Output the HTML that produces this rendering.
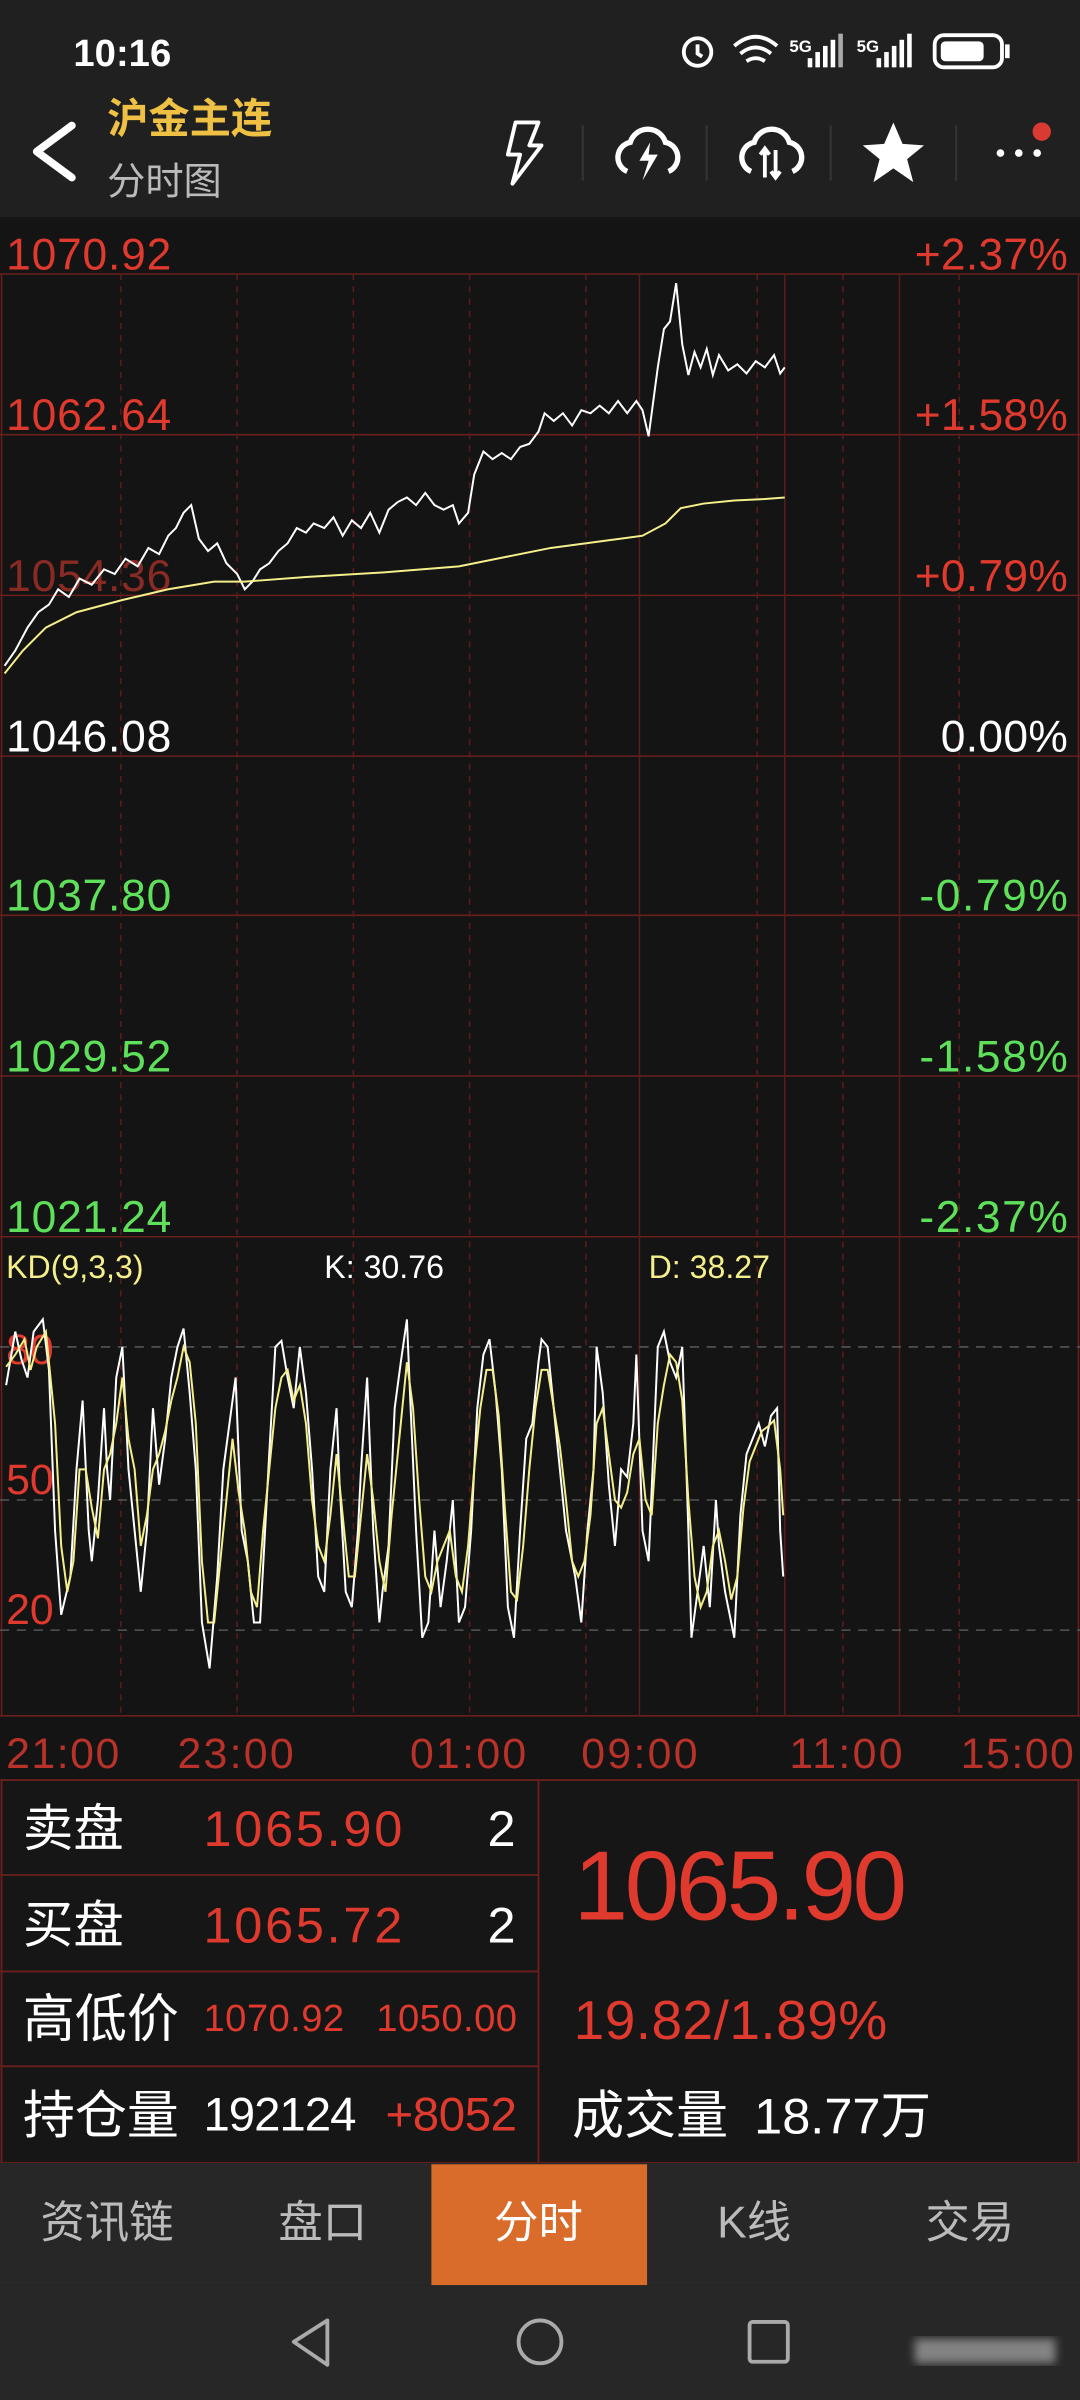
<!DOCTYPE html>
<html><head><meta charset="utf-8"><style>
html,body{margin:0;padding:0;background:#141414;}
svg{display:block;width:1080px;height:2400px;}
text{font-family:"Liberation Sans","Noto Sans CJK SC",sans-serif;}
</style></head><body>
<svg viewBox="0 0 706 1568" preserveAspectRatio="none" xmlns="http://www.w3.org/2000/svg">
<defs><filter id="bl"><feGaussianBlur stdDeviation="3"/></filter></defs>
<rect x="0" y="0" width="706" height="142" fill="#202020"/>
<rect x="0" y="142" width="706" height="1021" fill="#141414"/>
<text x="48" y="43" font-size="25" fill="#fff" font-weight="bold">10:16</text>
<g fill="none" stroke="#fff" stroke-width="2.5">
<circle cx="456" cy="34" r="9"/><path d="M456 29v6l3 2"/>
<path d="M480 30q14-12 28 0M484 35q10-8 20 0M488 40q6-4 12 0"/>
<rect x="611" y="23" width="44" height="21" rx="6"/>
</g>
<rect x="615" y="27" width="28" height="13" rx="3" fill="#fff"/>
<rect x="657" y="29" width="3" height="9" fill="#fff"/>
<text x="516" y="34" font-size="11" fill="#fff" font-weight="bold">5G</text>
<text x="560" y="34" font-size="11" fill="#fff" font-weight="bold">5G</text>
<g fill="#fff"><rect x="528" y="38" width="3" height="6"/><rect x="533" y="34" width="3" height="10"/><rect x="538" y="30" width="3" height="14"/><rect x="543" y="26" width="3" height="18"/><rect x="573" y="38" width="3" height="6"/><rect x="578" y="34" width="3" height="10"/><rect x="583" y="30" width="3" height="14"/><rect x="588" y="26" width="3" height="18"/><rect x="593" y="22" width="3" height="22"/><rect x="548" y="22" width="3" height="22" fill="#aaa"/></g>
<path d="M47 82 L24 99 L47 116" fill="none" stroke="#fff" stroke-width="5" stroke-linecap="round" stroke-linejoin="round"/>
<text x="70" y="87" font-size="27" fill="#eec043" font-weight="bold">沪金主连</text>
<text x="70" y="127" font-size="25" fill="#bbb">分时图</text>
<path d="M337 80 L352 80 L346 95 L354 95 L335 120 L340 101 L332 101 Z" fill="none" stroke="#fff" stroke-width="2.5" stroke-linejoin="round"/>
<g stroke="#333" stroke-width="1.5"><line x1="381" y1="82" x2="381" y2="118"/><line x1="462" y1="82" x2="462" y2="118"/><line x1="543" y1="82" x2="543" y2="118"/><line x1="625" y1="82" x2="625" y2="118"/></g>
<path d="M410 112 a10 10 0 0 1 2-19 a12 12 0 0 1 23 0 a10 10 0 0 1 2 19" fill="none" stroke="#fff" stroke-width="3.5"/>
<path d="M425 93 L418 105 L424 105 L420 118 L430 101 L424 101 Z" fill="#fff"/>
<path d="M491 112 a10 10 0 0 1 2-19 a12 12 0 0 1 23 0 a10 10 0 0 1 2 19" fill="none" stroke="#fff" stroke-width="3.5"/>
<path d="M500 98v18M507 98v18M497 101l3-4 3 4M504 112l3 4 3-4" fill="none" stroke="#fff" stroke-width="2.5"/>
<path d="M584 80 L590 94 L604 95 L593 104 L597 119 L584 110 L571 119 L575 104 L564 95 L578 94 Z" fill="#fff"/>
<g fill="#fff"><circle cx="654" cy="100" r="2.5"/><circle cx="666" cy="100" r="2.5"/><circle cx="678" cy="100" r="2.5"/></g>
<circle cx="681" cy="86" r="6" fill="#d93b32"/>
<g stroke="#6a1f1c" stroke-width="1">
<line x1="0" y1="179" x2="706" y2="179"/><line x1="0" y1="284" x2="706" y2="284"/><line x1="0" y1="389" x2="706" y2="389"/><line x1="0" y1="494" x2="706" y2="494"/><line x1="0" y1="598" x2="706" y2="598"/><line x1="0" y1="703" x2="706" y2="703"/><line x1="0" y1="808" x2="706" y2="808"/><line x1="0" y1="1121" x2="706" y2="1121"/>
<line x1="1" y1="179" x2="1" y2="1121"/><line x1="705" y1="179" x2="705" y2="1121"/>
</g>
<g stroke="#5a1c1a" stroke-width="1" stroke-dasharray="4,4">
<line x1="79" y1="179" x2="79" y2="1121"/><line x1="155" y1="179" x2="155" y2="1121"/><line x1="231" y1="179" x2="231" y2="1121"/><line x1="307" y1="179" x2="307" y2="1121"/><line x1="383" y1="179" x2="383" y2="1121"/><line x1="495" y1="179" x2="495" y2="1121"/><line x1="551" y1="179" x2="551" y2="1121"/><line x1="627" y1="179" x2="627" y2="1121"/>
</g>
<g stroke="#5a1c1a" stroke-width="1"><line x1="418" y1="179" x2="418" y2="1121"/><line x1="513" y1="179" x2="513" y2="1121"/><line x1="588" y1="179" x2="588" y2="1121"/></g>
<g font-size="29">
<text x="4" y="176" fill="#e0392e" textLength="108">1070.92</text><text x="598" y="176" fill="#e0392e" textLength="100">+2.37%</text>
<text x="4" y="281" fill="#e0392e" textLength="108">1062.64</text><text x="598" y="281" fill="#e0392e" textLength="100">+1.58%</text>
<text x="4" y="386" fill="#8a2a24" textLength="108">1054.36</text><text x="598" y="386" fill="#e0392e" textLength="100">+0.79%</text>
<text x="4" y="491" fill="#fff" textLength="108">1046.08</text><text x="615" y="491" fill="#fff" textLength="83">0.00%</text>
<text x="4" y="595" fill="#5ee05a" textLength="108">1037.80</text><text x="601" y="595" fill="#5ee05a" textLength="97">-0.79%</text>
<text x="4" y="700" fill="#5ee05a" textLength="108">1029.52</text><text x="601" y="700" fill="#5ee05a" textLength="97">-1.58%</text>
<text x="4" y="805" fill="#5ee05a" textLength="108">1021.24</text><text x="601" y="805" fill="#5ee05a" textLength="97">-2.37%</text>
</g>
<polyline fill="none" stroke="#fff" stroke-width="1.3" points="3,435 10,425 18,410 25,400 32,395 38,385 45,390 52,378 60,382 68,372 75,375 82,365 90,370 97,358 104,362 110,350 115,345 120,335 125,330 130,352 136,360 142,355 148,368 155,375 160,385 165,380 170,372 176,368 182,360 188,355 194,345 200,348 205,342 212,345 218,338 224,350 230,340 236,345 242,335 248,348 254,333 260,328 266,325 272,330 278,322 284,330 290,333 296,330 300,342 306,335 310,310 316,295 322,300 328,296 334,300 340,292 346,290 352,282 356,270 362,275 368,270 374,278 380,268 386,270 392,265 398,270 404,262 410,270 416,262 420,268 424,285 430,240 434,215 438,210 442,185 446,225 450,245 454,230 458,240 462,228 466,245 470,232 476,242 482,238 488,244 494,236 500,240 506,232 510,244 513,240"/>
<polyline fill="none" stroke="#f4ef8a" stroke-width="1.3" points="3,440 15,425 30,410 50,400 80,392 110,385 140,380 160,380 200,377 250,374 300,370 330,364 360,358 390,354 420,350 435,342 445,332 460,329 480,327 500,326 513,325"/>
<text x="4" y="835" font-size="21" fill="#f4ef8a">KD(9,3,3)</text>
<text x="212" y="835" font-size="21" fill="#fff">K: 30.76</text>
<text x="424" y="835" font-size="21" fill="#f4ef8a">D: 38.27</text>
<g stroke="#555" stroke-dasharray="6,5"><line x1="0" y1="880" x2="706" y2="880"/><line x1="0" y1="980" x2="706" y2="980"/><line x1="0" y1="1065" x2="706" y2="1065"/></g>
<g font-size="28" fill="#e0392e"><text x="4" y="891">80</text><text x="4" y="976">50</text><text x="4" y="1061">20</text></g>
<polyline fill="none" stroke="#fff" stroke-width="1.3" points="4,905 10,870 14,888 18,900 22,870 28,862 32,895 36,1000 40,1055 46,1030 50,960 54,915 58,1000 60,1020 64,980 68,920 70,960 72,980 76,900 80,880 84,960 88,1000 92,1040 96,1000 100,920 104,970 108,940 112,900 116,880 120,868 124,910 128,960 132,1060 137,1090 142,1030 146,960 150,930 154,900 156,950 158,1000 162,1020 166,1060 170,1060 176,950 180,880 184,876 188,900 192,920 196,880 200,910 204,960 208,1030 212,1040 216,960 220,920 222,970 226,1040 230,1050 234,1000 236,960 240,900 244,1000 248,1060 250,1040 254,1010 258,920 262,890 266,862 268,910 272,1000 276,1070 280,1060 284,1000 288,1050 292,1020 296,980 300,1060 304,1050 308,1000 312,920 316,885 320,875 324,910 328,960 332,1050 336,1070 340,1000 344,940 348,930 352,890 354,875 358,880 362,920 366,960 370,1000 376,1030 380,1060 384,1000 388,960 390,880 394,910 398,970 402,1010 406,960 410,965 414,930 416,885 420,1000 424,1020 430,880 434,870 438,890 442,900 446,880 450,1000 452,1070 456,1040 460,1010 464,1050 468,980 470,1010 474,1040 478,1060 480,1070 484,990 488,950 492,940 496,930 500,945 504,925 508,920 510,1000 512,1030"/>
<polyline fill="none" stroke="#f4ef8a" stroke-width="1.3" points="4,893 10,885 16,875 20,895 24,880 30,870 36,930 40,1010 44,1040 48,1020 52,960 56,960 60,985 64,1005 68,960 72,950 76,930 80,900 84,940 88,960 92,1010 96,990 100,960 104,950 108,935 112,915 116,900 120,880 124,890 128,930 132,1020 136,1060 140,1060 144,1020 148,980 152,940 156,975 160,1000 164,1040 168,1050 172,1000 176,960 180,920 184,900 188,895 192,915 196,905 200,930 204,980 208,1010 212,1020 216,990 220,950 224,990 228,1030 232,1030 236,990 240,950 244,980 248,1020 252,1040 256,990 262,930 266,890 270,920 274,980 278,1030 282,1040 286,1020 290,1010 294,1000 298,1030 302,1040 306,1010 310,960 314,920 318,895 322,895 326,925 330,985 334,1040 338,1045 342,1010 346,960 350,920 354,895 358,895 362,920 366,945 370,980 374,1020 378,1030 382,1020 386,990 390,930 394,920 398,950 402,980 406,985 410,975 414,950 418,940 422,980 426,990 430,930 434,905 438,885 442,890 446,915 450,980 454,1030 458,1050 462,1040 466,1010 470,1000 474,1020 478,1045 482,1030 486,985 490,955 494,945 498,935 502,932 506,928 510,960 512,990"/>
<g font-size="28" fill="#b8322a"><text x="4" y="1155" textLength="74">21:00</text><text x="116" y="1155" textLength="76">23:00</text><text x="268" y="1155" textLength="76">01:00</text><text x="380" y="1155" textLength="76">09:00</text><text x="516" y="1155" textLength="74">11:00</text><text x="628" y="1155" textLength="74">15:00</text></g>
<rect x="0" y="1163" width="706" height="250" fill="#161616"/>
<g stroke="#6a1f1c" stroke-width="1.2" fill="none">
<line x1="0" y1="1163" x2="706" y2="1163"/><line x1="0" y1="1225" x2="352" y2="1225"/><line x1="0" y1="1288" x2="352" y2="1288"/><line x1="0" y1="1350" x2="352" y2="1350"/><line x1="0" y1="1413" x2="706" y2="1413"/>
<line x1="352" y1="1163" x2="352" y2="1413"/><line x1="1" y1="1163" x2="1" y2="1413"/><line x1="705" y1="1163" x2="705" y2="1413"/>
</g>
<g font-size="33">
<text x="15" y="1206" fill="#fff">卖盘</text><text x="133" y="1206" fill="#e0392e" textLength="130">1065.90</text><text x="337" y="1206" fill="#fff" text-anchor="end">2</text>
<text x="15" y="1269" fill="#fff">买盘</text><text x="133" y="1269" fill="#e0392e" textLength="130">1065.72</text><text x="337" y="1269" fill="#fff" text-anchor="end">2</text>
<text x="15" y="1331" fill="#fff" font-size="34">高低价</text><text x="133" y="1327" fill="#e0392e" font-size="25" textLength="92">1070.92</text><text x="246" y="1327" fill="#e0392e" font-size="25" textLength="92">1050.00</text>
<text x="15" y="1394" fill="#fff" font-size="34">持仓量</text><text x="133" y="1392" fill="#fff" font-size="31" textLength="100">192124</text><text x="252" y="1392" fill="#e0392e" font-size="31" textLength="86">+8052</text>
<text x="375" y="1254" fill="#e0392e" font-size="64" textLength="218">1065.90</text>
<text x="375" y="1332" fill="#e0392e" font-size="36" textLength="205">19.82/1.89%</text>
<text x="374" y="1394" fill="#fff" font-size="34">成交量</text><text x="493" y="1394" fill="#fff" font-size="33">18.77万</text>
</g>
<rect x="0" y="1413" width="706" height="80" fill="#272727"/>
<rect x="282" y="1414" width="141" height="79" fill="#d96c2b"/>
<g font-size="29" fill="#bbb" text-anchor="middle">
<text x="70" y="1462">资讯链</text><text x="211" y="1462">盘口</text><text x="352" y="1462" fill="#fff">分时</text><text x="493" y="1462">K线</text><text x="634" y="1462">交易</text>
</g>
<rect x="0" y="1493" width="706" height="75" fill="#272727"/>
<path d="M214 1516 L192 1530 L214 1545 Z" fill="none" stroke="#aaa" stroke-width="2.5" stroke-linejoin="round"/>
<circle cx="353" cy="1530" r="14" fill="none" stroke="#aaa" stroke-width="2.5"/>
<rect x="490" y="1517" width="25" height="26" rx="2" fill="none" stroke="#aaa" stroke-width="2.5"/>
<rect x="598" y="1528" width="92" height="16" fill="#9a9a9a" filter="url(#bl)" opacity="0.8"/>
</svg>
</body></html>
